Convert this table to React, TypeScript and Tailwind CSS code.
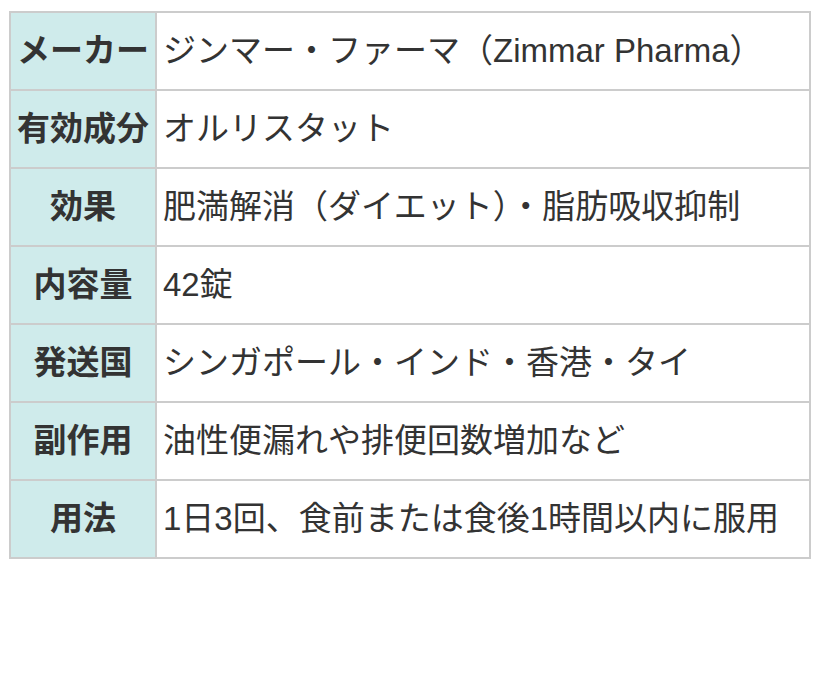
const rows: [string, string][] = [
  ["メーカー", "ジンマー・ファーマ（Zimmar Pharma）"],
  ["有効成分", "オルリスタット"],
  ["効果", "肥満解消（ダイエット）・脂肪吸収抑制"],
  ["内容量", "42錠"],
  ["発送国", "シンガポール・インド・香港・タイ"],
  ["副作用", "油性便漏れや排便回数増加など"],
  ["用法", "1日3回、食前または食後1時間以内に服用"],
];

const App = () => {
  return (
    <div
      className="w-[820px] h-[683px] bg-white pt-[11px] px-[9px] text-[#333]"
      style={{ fontFamily: '"Liberation Sans", "Noto Sans CJK JP", sans-serif' }}
    >
      <table className="w-[802px] border-collapse border-2 border-[#cccccc]">
        <tbody>
          {rows.map(([head, body]) => (
            <tr key={head} className="h-[78px]">
              <th className="w-[146px] border-2 border-[#cccccc] bg-[#cfebeb] px-[5px] text-center text-[33px] font-bold leading-[46px] whitespace-nowrap">
                {head}
              </th>
              <td className="border-2 border-[#cccccc] px-[6px] text-left text-[33px] leading-[46px] whitespace-nowrap">
                {body}
              </td>
            </tr>
          ))}
        </tbody>
      </table>
    </div>
  );
};

export default App;
